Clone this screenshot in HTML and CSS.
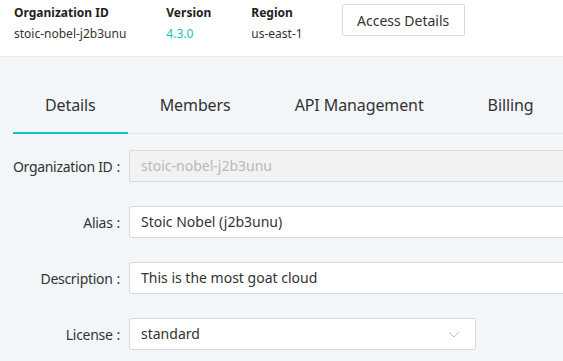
FILE: index.html
```html
<!DOCTYPE html>
<html>
	<head>
		<meta content="text/html;charset=utf-8" http-equiv="Content-Type">
		<link rel="stylesheet" href="styles.css">
	</head>
	<body>
		<div class="header">
			<div class="meta">
				<div class="meta-title">Organization ID</div>
				<div class="meta-value">stoic-nobel-j2b3unu</div>
			</div>
			<div class="meta">
				<div class="meta-title">Version</div>
				<div class="meta-value version">4.3.0</div>
			</div>
			<div class="meta">
				<div class="meta-title">Region</div>
				<div class="meta-value">us-east-1</div>
			</div>
			<button class="btn">Access Details</button>
		</div>

		<div class="content">
			<div class="tabs">
				<div class="tab active">Details</div>
				<div class="tab">Members</div>
				<div class="tab">API Management</div>
				<div class="tab">Billing</div>
			</div>

			<div class="form">
				<div class="row">
					<label class="label">Organization ID<span class="colon">:</span></label>
					<div class="input disabled">stoic-nobel-j2b3unu</div>
				</div>
				<div class="row">
					<label class="label">Alias<span class="colon">:</span></label>
					<div class="input">Stoic Nobel (j2b3unu)</div>
				</div>
				<div class="row">
					<label class="label">Description<span class="colon">:</span></label>
					<div class="input">This is the most goat cloud</div>
				</div>
				<div class="row">
					<label class="label">License<span class="colon">:</span></label>
					<div class="input select">
						<span>standard</span>
						<svg class="arrow" width="12" height="12" viewBox="0 0 12 12"><path d="M1 4 L6 9 L11 4" fill="none" stroke="#bfbfbf" stroke-width="1"/></svg>
					</div>
				</div>
			</div>
		</div>
	</body>
</html>
```

FILE: styles.css
```css
body {
	margin: 0;
	font-family: "Noto Sans", sans-serif;
	color: #333;
	background: #f3f6f9;
	width: 563px;
	height: 361px;
	overflow: hidden;
}
.header {
	background: #fff;
	height: 56px;
	border-bottom: 1px solid #eaedf0;
	display: flex;
	align-items: flex-start;
	padding-left: 14px;
}
.meta {
	margin-right: 40px;
	padding-top: 2px;
	font-size: 12px;
	line-height: 21px;
}
.meta-title {
	font-weight: bold;
	color: #222;
}
.version {
	color: #13c2c2;
}
.btn {
	margin-top: 4px;
	margin-left: -1px;
	height: 32px;
	width: 123px;
	border: 1px solid #d9d9d9;
	border-radius: 2px;
	background: #fff;
	font-family: "Noto Sans", sans-serif;
	font-size: 14px;
	color: #333;
	padding: 0;
}
.content {
	padding: 20px 0 0 13px;
	overflow: hidden;
}
.tabs {
	display: flex;
	border-bottom: 1px solid #e4e7ea;
}
.tab {
	flex-shrink: 0;
	padding: 16px 32px 15px;
	font-size: 16px;
	line-height: 24px;
	letter-spacing: -0.1px;
	color: #333;
	border-bottom: 2px solid transparent;
	margin-bottom: -1px;
}
.tab.active {
	border-bottom-color: #13c2c2;
}
.form {
	margin-top: 16px;
	margin-left: -13px;
}
.row {
	display: flex;
	align-items: center;
	margin-bottom: 24px;
}
.label {
	flex-shrink: 0;
	white-space: nowrap;
	width: 120px;
	padding-right: 9px;
	text-align: right;
	font-size: 14px;
	letter-spacing: -0.3px;
	color: #333;
}
.colon {
	margin-left: 4px;
}
.input {
	box-sizing: border-box;
	flex-shrink: 0;
	height: 32px;
	width: 460px;
	border: 1px solid #d9d9d9;
	border-radius: 2px;
	background: #fff;
	padding: 0 11px;
	font-size: 14px;
	line-height: 30px;
	color: #333;
}
.input.disabled {
	background: #f2f2f2;
	color: #b8b8b8;
}
.input.select {
	width: 347px;
	display: flex;
	justify-content: space-between;
	align-items: center;
}
.arrow {
	margin-right: 4px;
}
```
